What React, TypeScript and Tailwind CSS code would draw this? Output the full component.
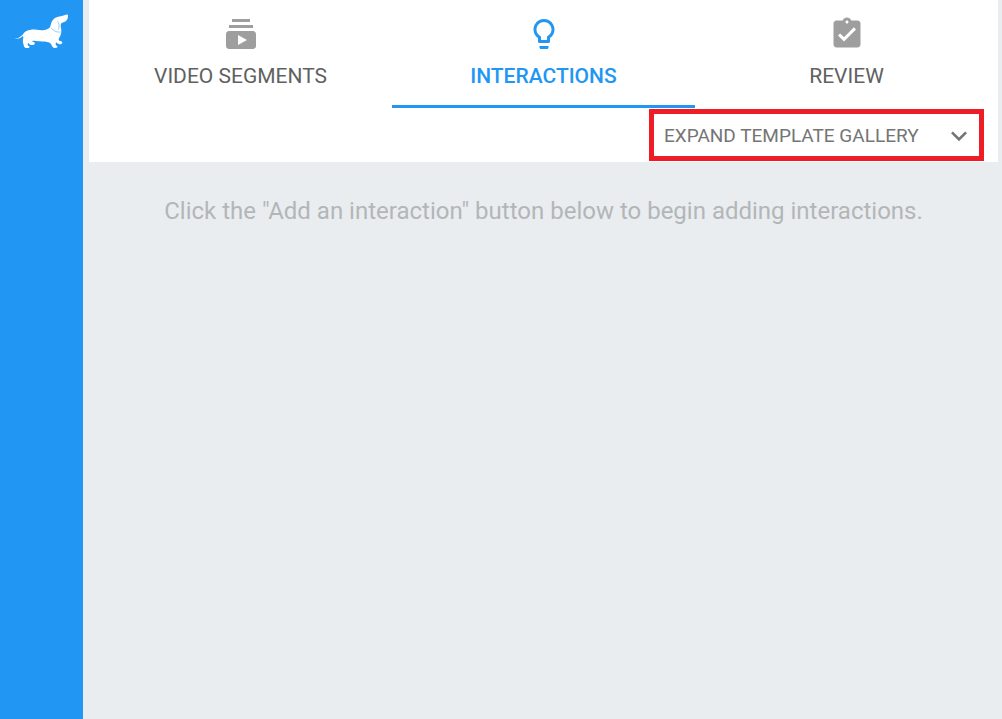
import React from "react";
import {
  MdSubscriptions,
  MdLightbulbOutline,
  MdAssignmentTurnedIn,
  MdKeyboardArrowDown,
} from "react-icons/md";

const tabs = [
  { label: "VIDEO SEGMENTS", icon: MdSubscriptions, active: false },
  { label: "INTERACTIONS", icon: MdLightbulbOutline, active: true },
  { label: "REVIEW", icon: MdAssignmentTurnedIn, active: false },
];

function DogLogo() {
  return (
    <svg viewBox="0 0 192 132" className="h-11 w-16" aria-hidden="true">
      <path
        fill="#fff"
        d="M13 91C25 92 32 86 38 80C43 71 51 66 63 65C78 64 90 69 104 66C115 64 121 60 122 51C124 39 131 30 142 27C150 25 156 25 163 22C169 19 175 18 174 25C174 30 172 36 168 39C164 42 157 43 153 47C150 53 155 62 154 72C153 81 149 87 146 94C145 98 150 99 154 100C159 103 157 108 152 109C146 110 142 106 138 103C136 108 137 112 142 115C144 118 141 120 134 120C129 120 127 117 125 112C123 107 121 105 115 103C105 99 95 101 86 100C78 99 71 97 67 99C66 101 69 102 73 103C77 107 72 112 67 111C61 111 57 109 55 104C51 109 53 113 58 115C61 119 55 121 49 120C43 120 42 116 41 111C39 103 37 97 40 89C40 87 39 85 38 84C31 91 24 94 13 91Z"
      />
      <path
        fill="none"
        stroke="#2196f3"
        strokeOpacity="0.7"
        strokeWidth="2"
        d="M123 59C129 67 139 74 152 72M143 40C148 48 149 56 145 65"
      />
    </svg>
  );
}

export default function App() {
  return (
    <div className="flex min-h-screen bg-[#e9edf0] font-[Roboto,sans-serif]">
      <aside className="w-[83px] shrink-0 bg-[#2196f3] pt-2 pl-[10px]">
        <a href="#home" aria-label="Home" className="block w-16">
          <DogLogo />
        </a>
      </aside>
      <main className="mr-1 ml-1.5 min-w-0 flex-1">
        <header className="bg-white">
          <nav className="grid grid-cols-3">
            {tabs.map(({ label, icon: Icon, active }) => (
              <button
                key={label}
                type="button"
                aria-current={active ? "page" : undefined}
                className={
                  active
                    ? "flex h-[108px] flex-col items-center border-b-3 border-[#2196f3] pt-4 text-[21px] leading-6 font-medium text-[#2196f3]"
                    : "flex h-[108px] flex-col items-center border-b-3 border-transparent pt-4 text-[21px] leading-6 text-[#616161]"
                }
              >
                <Icon
                  className={active ? "mb-3 size-9" : "mb-3 size-9 text-[#9e9e9e]"}
                  aria-hidden="true"
                />
                {label}
              </button>
            ))}
          </nav>
          <div className="flex justify-end pt-px pr-3.5 pb-px">
            <button
              type="button"
              aria-expanded="false"
              className="flex h-[52px] w-[335px] items-center justify-between border-5 border-[#ee1c25] pt-0.5 pr-1 pl-2.5 text-[19px] leading-6 text-[#757575]"
            >
              EXPAND TEMPLATE GALLERY
              <MdKeyboardArrowDown className="size-8" aria-hidden="true" />
            </button>
          </div>
        </header>
        <p className="pt-8 text-center text-2xl leading-[34px] text-[#b3b6b8]">
          Click the "Add an interaction" button below to begin adding interactions.
        </p>
      </main>
    </div>
  );
}
